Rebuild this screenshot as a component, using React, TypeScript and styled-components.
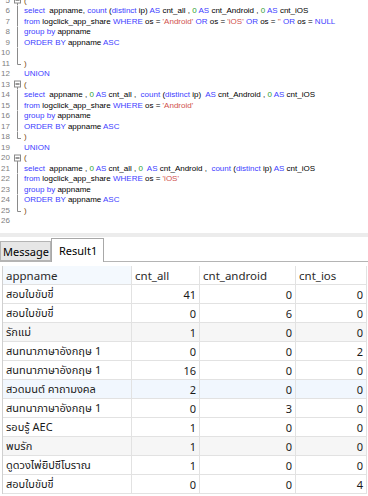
import React from 'react'
import styled, { createGlobalStyle } from 'styled-components'

const GlobalStyle = createGlobalStyle`
    html, body {
        margin: 0;
        padding: 0;
        background: #f0f0f0;
    }
`

const Window = styled.div`
    width: 368px;
    height: 496px;
    overflow: hidden;
    display: flex;
    flex-direction: column;
    background: #f0f0f0;
`

const Editor = styled.div`
    height: 233px;
    flex: none;
    background: #ffffff;
    overflow: hidden;
`

const EditorLines = styled.div`
    margin-top: -5px;
`

const CodeLine = styled.div`
    display: flex;
    height: 10.5px;
    align-items: center;
    font-family: 'Liberation Sans', Arial, sans-serif;
    font-size: 8px;
    white-space: pre;
`

const LineNo = styled.span`
    width: 10px;
    flex: none;
    text-align: right;
    color: #808080;
`

const FoldCell = styled.svg`
    width: 14px;
    height: 10.5px;
    flex: none;
`

const Code = styled.span`
    color: #000000;
`

const Token = styled.span<{ $kind: string }>`
    color: ${(p) =>
        ({
            kw: '#4040ff',
            str: '#d0504c',
            num: '#2f9e2f',
            brace: '#7a4a10',
            plain: '#000000',
        })[p.$kind]};
`

const Splitter = styled.div`
    height: 4px;
    flex: none;
    background: #ececec;
`

const TabStrip = styled.div`
    height: 24px;
    flex: none;
    display: flex;
    align-items: flex-end;
    background: #ffffff;
    border-bottom: 1px solid #b4b4b4;
    font-family: 'Noto Sans', 'Open Sans', sans-serif;
    font-size: 11px;
`

const Tab = styled.div<{ $active?: boolean }>`
    display: flex;
    align-items: center;
    box-sizing: border-box;
    padding: 0 ${(p) => (p.$active ? '7px' : '2px')};
    height: ${(p) => (p.$active ? '24px' : '20px')};
    margin-bottom: ${(p) => (p.$active ? '-1px' : '0')};
    background: ${(p) => (p.$active ? '#ffffff' : '#e6e6e6')};
    border: 1px solid ${(p) => (p.$active ? '#a8a8a8' : '#b4b4b4')};
    border-bottom: ${(p) => (p.$active ? 'none' : '1px solid #b4b4b4')};
    color: #000000;
    width: ${(p) => (p.$active ? '53px' : '51px')};
`

const GridPanel = styled.div`
    flex: 1;
    background: #ffffff;
    padding: 4px 1px 0 2px;
    display: flex;
    flex-direction: column;
    font-family: 'Noto Sans', 'Open Sans', 'Noto Sans Thai', 'Tahoma', sans-serif;
    font-size: 11px;
    color: #1a1a1a;
`

const Table = styled.div`
    display: grid;
    grid-template-columns: 129px 68px 96px 71px;
    border-left: 1px solid #d0d0d0;
`

const HeaderCell = styled.div<{ $tint?: boolean }>`
    height: 19px;
    box-sizing: border-box;
    border-right: 1px solid #e2e2e2;
    border-bottom: 1px solid #e2e2e2;
    padding: 0 3px;
    display: flex;
    align-items: center;
    font-size: 11.5px;
    background: ${(p) => (p.$tint ? '#f4f9fe' : '#ffffff')};
    color: #2a2a2a;
`

const Cell = styled.div<{ $num?: boolean; $bg: string }>`
    height: 19px;
    box-sizing: border-box;
    border-right: 1px solid #e2e2e2;
    border-bottom: 1px solid #e2e2e2;
    padding: 0 3px;
    display: flex;
    align-items: center;
    justify-content: ${(p) => (p.$num ? 'flex-end' : 'flex-start')};
    background: ${(p) => p.$bg};
    white-space: nowrap;
    overflow: hidden;
`

type Fold = 'line' | 'end' | 'start' | 'none'

const code: [number, string, Fold][] = [
    [5, '(', 'start'],
    [6, "select  appname, count (distinct ip) AS cnt_all , 0 AS cnt_Android , 0 AS cnt_iOS", 'line'],
    [7, "from logclick_app_share WHERE os = 'Android' OR os = 'iOS' OR os = '' OR os = NULL", 'line'],
    [8, 'group by appname', 'line'],
    [9, 'ORDER BY appname ASC', 'line'],
    [10, '', 'line'],
    [11, ')', 'end'],
    [12, 'UNION', 'none'],
    [13, '(', 'start'],
    [14, 'select  appname , 0 AS cnt_all ,  count (distinct ip)  AS cnt_Android , 0 AS cnt_iOS', 'line'],
    [15, "from logclick_app_share WHERE os = 'Android'", 'line'],
    [16, 'group by appname', 'line'],
    [17, 'ORDER BY appname ASC', 'line'],
    [18, ')', 'end'],
    [19, 'UNION', 'none'],
    [20, '(', 'start'],
    [21, 'select  appname , 0 AS cnt_all , 0  AS cnt_Android ,  count (distinct ip) AS cnt_iOS', 'line'],
    [22, "from logclick_app_share WHERE os = 'iOS'", 'line'],
    [23, 'group by appname', 'line'],
    [24, 'ORDER BY appname ASC', 'line'],
    [25, ')', 'end'],
    [26, '', 'none'],
]

const KEYWORDS = new Set([
    'select', 'from', 'where', 'or', 'group', 'by', 'order', 'asc',
    'union', 'as', 'count', 'distinct', 'null',
])

function tokenize(s: string) {
    const parts = s.match(/'[^']*'|\d+|[A-Za-z_]+|\s+|./g) || []
    return parts.map((t) => {
        if (t.startsWith("'")) return { t, kind: 'str' }
        if (/^\d+$/.test(t)) return { t, kind: 'num' }
        if (KEYWORDS.has(t.toLowerCase())) return { t, kind: 'kw' }
        if ((t === '(' || t === ')') && s.trim().length === 1)
            return { t, kind: 'brace' }
        return { t, kind: 'plain' }
    })
}

function FoldMark({ kind }: { kind: Fold }) {
    const stroke = '#8a8a8a'
    return (
        <FoldCell viewBox="0 0 14 10.5">
            {kind === 'line' && (
                <line x1="7.5" y1="0" x2="7.5" y2="10.5" stroke={stroke} strokeWidth="1" />
            )}
            {kind === 'end' && (
                <path d="M7.5 0 V6.5 H11" fill="none" stroke={stroke} strokeWidth="1" />
            )}
            {kind === 'start' && (
                <g>
                    <rect x="4.5" y="2" width="6" height="6" fill="#fff" stroke={stroke} strokeWidth="1" />
                    <line x1="5.5" y1="5" x2="9.5" y2="5" stroke="#333" strokeWidth="1" />
                    <line x1="7.5" y1="8" x2="7.5" y2="10.5" stroke={stroke} strokeWidth="1" />
                </g>
            )}
        </FoldCell>
    )
}

const rows: [string, number, number, number][] = [
    ['สอบใบขับขี่', 41, 0, 0],
    ['สอบใบขับขี่', 0, 6, 0],
    ['รักแม่', 1, 0, 0],
    ['สนทนาภาษาอังกฤษ 1', 0, 0, 2],
    ['สนทนาภาษาอังกฤษ 1', 16, 0, 0],
    ['สวดมนต์ คาถามงคล', 2, 0, 0],
    ['สนทนาภาษาอังกฤษ 1', 0, 3, 0],
    ['รอบรู้ AEC', 1, 0, 0],
    ['พบรัก', 1, 0, 0],
    ['ดูดวงไพ่ยิปซีโบราณ', 1, 0, 0],
    ['สอบใบขับขี่', 0, 0, 4],
]

const rowBg = (i: number) => {
    if (i === 5) return '#f1f7fe'
    if (i === 2 || i === 8) return '#f6f6f6'
    return '#ffffff'
}

export default function App() {
    return (
        <Window>
            <GlobalStyle />
            <Editor>
                <EditorLines>
                    {code.map(([n, text, fold]) => (
                        <CodeLine key={n}>
                            <LineNo>{n}</LineNo>
                            <FoldMark kind={fold} />
                            <Code>
                                {tokenize(text).map((tok, i) => (
                                    <Token key={i} $kind={tok.kind}>
                                        {tok.t}
                                    </Token>
                                ))}
                            </Code>
                        </CodeLine>
                    ))}
                </EditorLines>
            </Editor>
            <Splitter />
            <TabStrip>
                <Tab>Message</Tab>
                <Tab $active>Result1</Tab>
            </TabStrip>
            <GridPanel>
                <Table>
                    <HeaderCell $tint>appname</HeaderCell>
                    <HeaderCell>cnt_all</HeaderCell>
                    <HeaderCell>cnt_android</HeaderCell>
                    <HeaderCell>cnt_ios</HeaderCell>
                    {rows.map(([name, all, android, ios], i) => (
                        <React.Fragment key={i}>
                            <Cell $bg={rowBg(i)}>{name}</Cell>
                            <Cell $num $bg={rowBg(i)}>{all}</Cell>
                            <Cell $num $bg={rowBg(i)}>{android}</Cell>
                            <Cell $num $bg={rowBg(i)}>{ios}</Cell>
                        </React.Fragment>
                    ))}
                </Table>
            </GridPanel>
        </Window>
    )
}
